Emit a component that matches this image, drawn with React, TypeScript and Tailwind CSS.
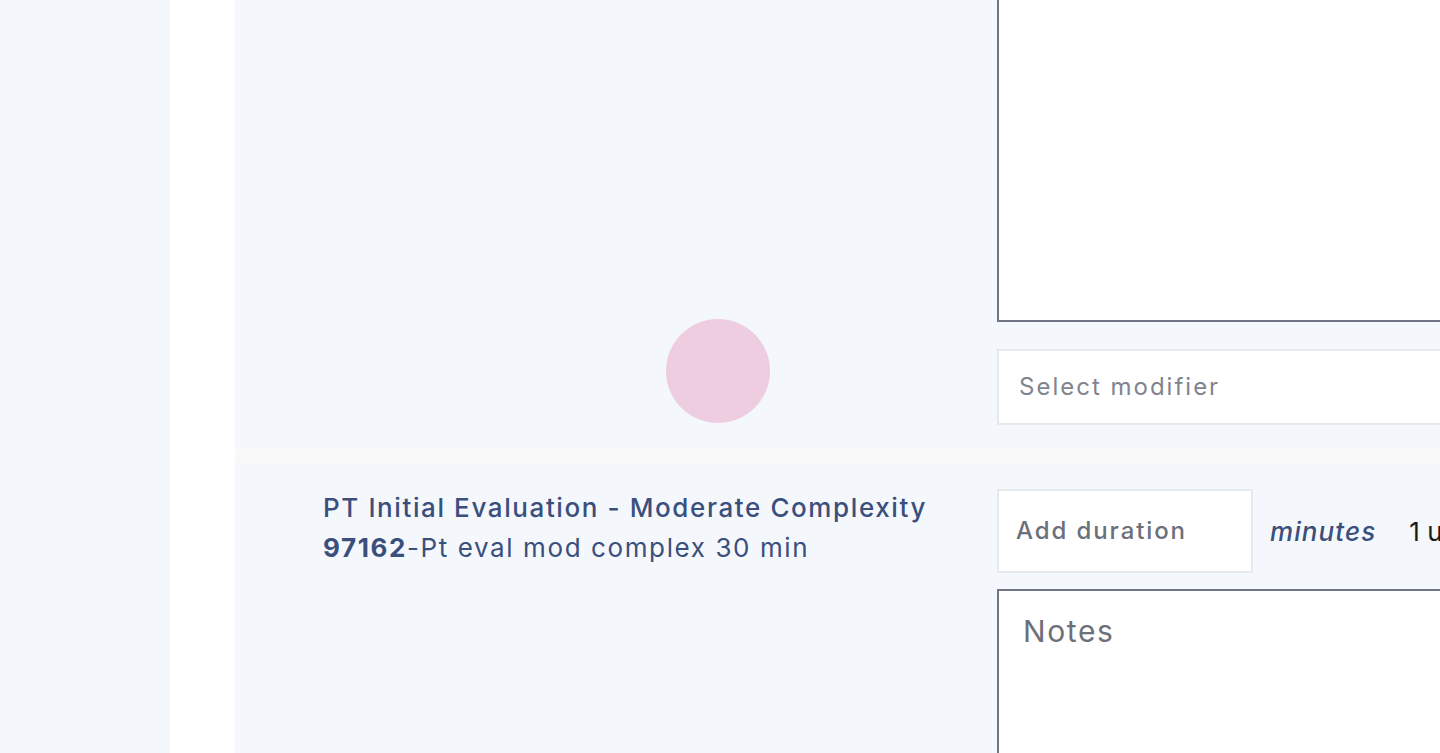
import React from "react";

export default function App() {
  return (
    <div className="flex h-[753px] w-[1440px] overflow-hidden bg-[#f4f7fc] font-['Inter',sans-serif]">
      <div className="w-[170px] shrink-0 bg-[#f4f7fc]"></div>
      <div className="w-[65px] shrink-0 bg-white"></div>
      <div className="flex min-w-0 flex-1 flex-col">
        <div className="flex h-[448px] shrink-0 bg-[#f4f7fc]">
          <div className="flex w-[762px] shrink-0 items-end pb-[25px] pl-[431px]">
            <div className="h-[104px] w-[104px] rounded-full bg-[#efcde0]"></div>
          </div>
          <div className="flex w-[640px] shrink-0 flex-col">
            <div className="h-[322px] border-x-2 border-b-2 border-[#6f7585] bg-white"></div>
            <div className="mt-[27px] flex h-[76px] items-center border-2 border-[#e6e9ee] bg-white px-5">
              <span className="text-[24px] tracking-[2px] text-[#80848d]">Select modifier</span>
            </div>
          </div>
        </div>
        <div className="h-[15px] shrink-0 bg-[#f9f9fa]"></div>
        <div className="flex flex-1 bg-[#f4f7fc]">
          <div className="w-[762px] shrink-0 pl-[88px] pt-[25px] text-[26px] leading-[40px] tracking-[1.6px] text-[#3b4f7d]">
            <div className="font-medium">PT Initial Evaluation - Moderate Complexity</div>
            <div>
              <span className="font-bold">97162</span>-Pt eval mod complex 30 min
            </div>
          </div>
          <div className="flex w-[640px] shrink-0 flex-col pt-[26px]">
            <div className="flex items-center">
              <div className="flex h-[84px] w-[256px] shrink-0 items-center border-2 border-[#e6e9ee] bg-white px-[17px]">
                <span className="text-[24px] font-medium tracking-[1.9px] text-[#6b707b]">Add duration</span>
              </div>
              <span className="ml-[17px] text-[26px] font-medium italic tracking-[1.1px] text-[#3b4f7d]">minutes</span>
              <span className="ml-[33px] whitespace-nowrap text-[26px] text-[#1a1a1a]">1 u</span>
            </div>
            <div className="mt-[16px] h-[200px] border-2 border-[#6f7585] bg-white px-6 pt-[18px]">
              <span className="text-[30px] tracking-[1.6px] text-[#6b707b]">Notes</span>
            </div>
          </div>
        </div>
      </div>
    </div>
  );
}
